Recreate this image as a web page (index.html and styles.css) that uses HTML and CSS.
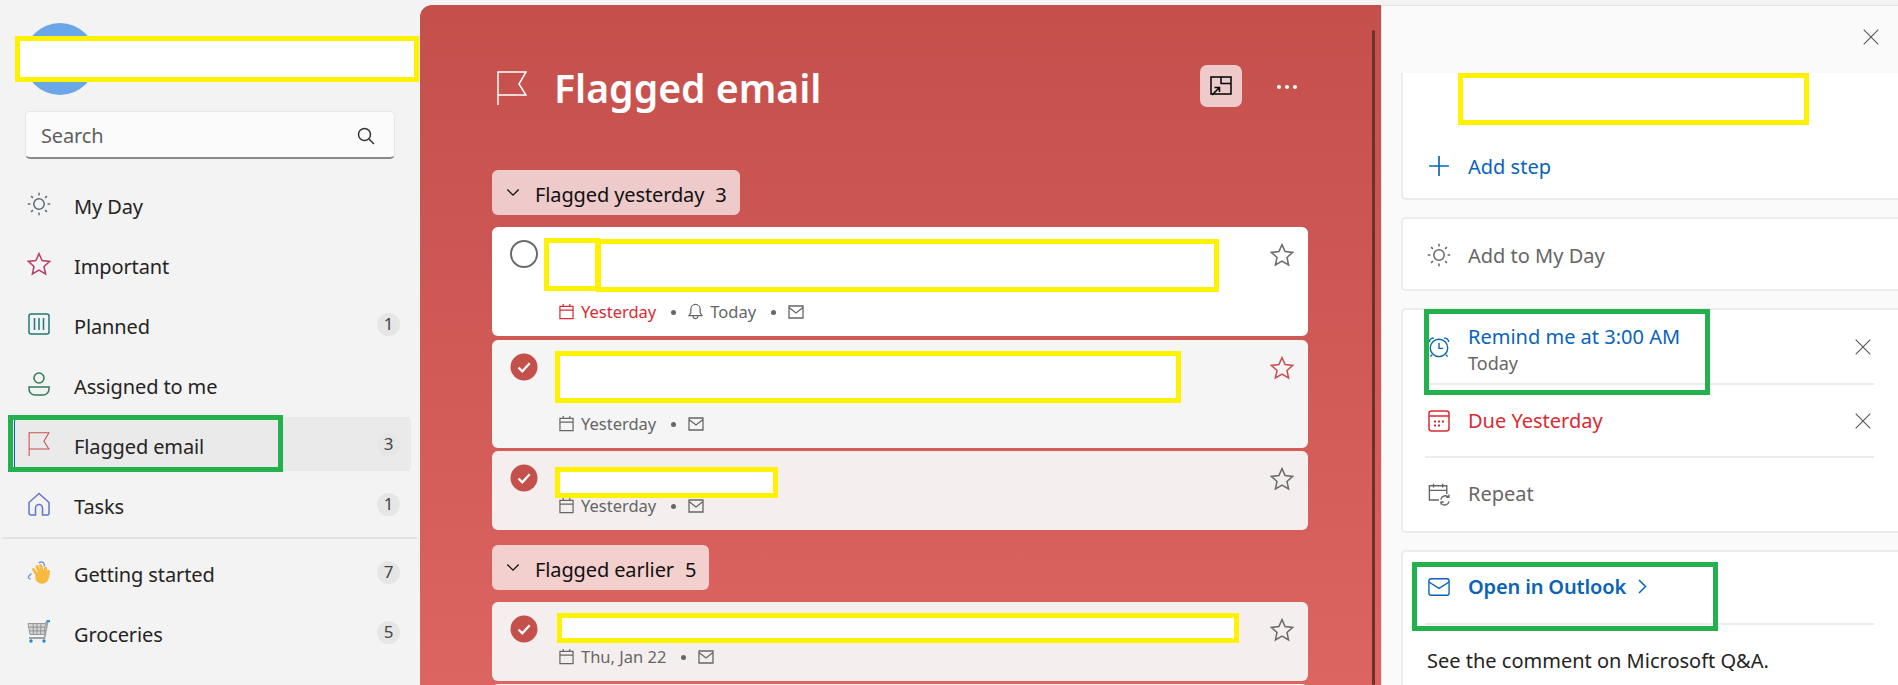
FILE: index.html
```html
<!DOCTYPE html>
<html lang="en">
  <head>
    <meta charset="utf-8" />
    <meta name="viewport" content="width=device-width, initial-scale=1" />
    <title>To Do - Flagged email</title>
    <link rel="stylesheet" href="styles.css">
  </head>
  <body>
    <svg class="defs" width="0" height="0" aria-hidden="true">
      <symbol id="i-sun" viewBox="0 0 24 24">
        <circle cx="12" cy="12" r="5.2" />
        <path d="M12 .8v2.6M12 20.6v2.6M.8 12h2.6M20.6 12h2.6M4.100 4.100 5.900 5.900M18.100 18.100l1.800 1.800M4.100 19.900l1.800-1.800M18.100 5.900l1.800-1.800" />
      </symbol>
      <symbol id="i-star" viewBox="0 0 24 24">
        <path d="M12 1.600l3.100 7 7.600.8-5.700 5.100 1.600 7.500L12 18.200 5.400 22l1.600-7.500L1.300 9.400l7.600-.8z" />
      </symbol>
      <symbol id="i-flag" viewBox="0 0 30 34">
        <path d="M1 34V1h28l-7 12 7 11H1" />
      </symbol>
      <symbol id="i-cal" viewBox="0 0 16 17">
        <path d="M1 3h14v13H1zM1 7h14M4.500 .5V3M11.500 .5V3" />
      </symbol>
      <symbol id="i-mail" viewBox="0 0 16 14">
        <path d="M1 1h14v12H1zM1 2.500l7 5.500 7-5.500" />
      </symbol>
      <symbol id="i-check" viewBox="0 0 28 28">
        <circle cx="14" cy="14" r="13.500" class="fill-red" />
        <path d="M8.500 14.500l3.800 3.800 7.400-8" class="stroke-white" />
      </symbol>
      <symbol id="i-x" viewBox="0 0 16 16">
        <path d="M.7 .7l14.600 14.600M15.300 .7 .7 15.300" />
      </symbol>
      <symbol id="i-chev" viewBox="0 0 16 10">
        <path d="M1.500 1.500 8 8l6.500-6.500" />
      </symbol>
    </svg>

    <div class="app">
      <aside class="sidebar">
        <div class="account">
          <div class="avatar"></div>
        </div>
        <div class="search">
          <span>Search</span>
          <svg class="search-icon" viewBox="0 0 18 18"><circle cx="7.500" cy="7.500" r="6" /><path d="M12 12l5 5" /></svg>
        </div>

        <ul class="nav">
          <li>
            <svg class="nav-icon c-slate"><use href="#i-sun" /></svg>
            <span class="nav-label">My Day</span>
          </li>
          <li>
            <svg class="nav-icon c-rose"><use href="#i-star" /></svg>
            <span class="nav-label">Important</span>
          </li>
          <li>
            <svg class="nav-icon c-teal" viewBox="0 0 24 24"><rect x="2" y="2" width="20" height="20" rx="2" /><path d="M7.500 6v12M12 6v12M16.500 6v12" /></svg>
            <span class="nav-label">Planned</span>
            <span class="badge">1</span>
          </li>
          <li>
            <svg class="nav-icon c-green" viewBox="0 0 24 24"><circle cx="12" cy="6" r="5" /><path d="M2 15h20v2a6 6 0 0 1-6 6H8a6 6 0 0 1-6-6z" /></svg>
            <span class="nav-label">Assigned to me</span>
          </li>
          <li class="active">
            <svg class="nav-icon c-red"><use href="#i-flag" /></svg>
            <span class="nav-label">Flagged email</span>
            <span class="badge">3</span>
          </li>
          <li>
            <svg class="nav-icon c-indigo" viewBox="0 0 24 24"><path d="M12 1.500 2 10.500V21a2 2 0 0 0 2 2h4.500v-7a3.500 3.500 0 0 1 7 0v7H20a2 2 0 0 0 2-2V10.500z" /></svg>
            <span class="nav-label">Tasks</span>
            <span class="badge">1</span>
          </li>
        </ul>
        <hr class="nav-sep" />
        <ul class="nav">
          <li>
            <svg class="nav-icon" viewBox="0 0 24 24">
              <path class="wave" d="M4.500 13.500 1.500 16.500c-.5 1 .5 2.500 2 2.500M12 3c1-1.500 4-1.500 5 .5.500 1 .5 2 0 3" />
              <circle class="hand-palm" cx="15" cy="17" r="6.800" />
              <path class="hand" d="M9.500 14 6.500 9.500M12.500 12 10 6.500M15.500 11.500 13.500 5.500M18.500 12.500V8M21 16l.5-4.500" />
            </svg>
            <span class="nav-label">Getting started</span>
            <span class="badge">7</span>
          </li>
          <li>
            <svg class="nav-icon" viewBox="0 0 24 24">
              <path class="cart" d="M1 3.500h17.500l-1.500 11H3z" />
              <path class="cart-lines" d="M1.500 7.200h16.500M2 10.900h15.500M6 3.500l.5 11M10 3.500v11M14 3.500l-.5 11" />
              <path class="cart-bar" d="M18.500 3.500 19.500 2M2 18h15.500l3-16" />
              <path class="cart-tip" d="M19.500 1.200H23" />
              <circle class="cart-wheel" cx="4" cy="21" r="1.700" />
              <circle class="cart-wheel" cx="17" cy="21" r="1.700" />
            </svg>
            <span class="nav-label">Groceries</span>
            <span class="badge">5</span>
          </li>
        </ul>
      </aside>

      <main class="list">
        <div class="list-scroll"></div>
        <header class="list-head">
          <svg class="list-flag"><use href="#i-flag" /></svg>
          <h1>Flagged email</h1>
          <button class="head-btn" type="button" aria-label="Suggestions">
            <svg viewBox="0 0 22 20"><rect x="1" y="1" width="20" height="17" /><path d="M11 1v6.500h10M2 19l7-7M4.500 11.500H9.500V16" /></svg>
          </button>
          <div class="head-more"><i></i><i></i><i></i></div>
        </header>

        <div class="group">
          <svg class="group-chev"><use href="#i-chev" /></svg>
          <span>Flagged yesterday</span>
          <span class="group-count">3</span>
        </div>

        <article class="task task-one">
          <span class="ring"></span>
          <div class="meta">
            <svg class="meta-icon c-due"><use href="#i-cal" /></svg>
            <span class="c-due">Yesterday</span>
            <i class="dot"></i>
            <svg class="meta-icon" viewBox="0 0 16 17"><path d="M8 1a5 5 0 0 1 5 5v4l2 3H1l2-3V6a5 5 0 0 1 5-5zM5.500 13.500a2.500 2.500 0 0 0 5 0" /></svg>
            <span>Today</span>
            <i class="dot"></i>
            <svg class="meta-icon mail"><use href="#i-mail" /></svg>
          </div>
          <svg class="star"><use href="#i-star" /></svg>
        </article>

        <article class="task task-two">
          <svg class="done"><use href="#i-check" /></svg>
          <div class="meta">
            <svg class="meta-icon"><use href="#i-cal" /></svg>
            <span>Yesterday</span>
            <i class="dot"></i>
            <svg class="meta-icon mail"><use href="#i-mail" /></svg>
          </div>
          <svg class="star c-red"><use href="#i-star" /></svg>
        </article>

        <article class="task task-three">
          <svg class="done"><use href="#i-check" /></svg>
          <div class="meta">
            <svg class="meta-icon"><use href="#i-cal" /></svg>
            <span>Yesterday</span>
            <i class="dot"></i>
            <svg class="meta-icon mail"><use href="#i-mail" /></svg>
          </div>
          <svg class="star"><use href="#i-star" /></svg>
        </article>

        <div class="group group-two">
          <svg class="group-chev"><use href="#i-chev" /></svg>
          <span>Flagged earlier</span>
          <span class="group-count">5</span>
        </div>

        <article class="task task-three">
          <svg class="done"><use href="#i-check" /></svg>
          <div class="meta">
            <svg class="meta-icon"><use href="#i-cal" /></svg>
            <span>Thu, Jan 22</span>
            <i class="dot"></i>
            <svg class="meta-icon mail"><use href="#i-mail" /></svg>
          </div>
          <svg class="star"><use href="#i-star" /></svg>
        </article>
        <article class="task task-three"></article>
      </main>

      <section class="detail">
        <div class="detail-top">
          <svg class="x-icon close"><use href="#i-x" /></svg>
        </div>

        <div class="card card-steps">
          <div class="row c-link">
            <svg class="row-icon" viewBox="0 0 20 20"><path d="M10 1v18M1 10h18" /></svg>
            <span>Add step</span>
          </div>
        </div>

        <div class="card">
          <div class="row row-day c-muted">
            <svg class="row-icon"><use href="#i-sun" /></svg>
            <span>Add to My Day</span>
          </div>
        </div>

        <div class="card">
          <div class="row row-sep row-remind">
            <svg class="row-icon c-link" viewBox="0 0 24 24">
              <circle cx="12" cy="13" r="9.500" />
              <path d="M12 7.500V13.500H16.500M1.500 6.500a4 4 0 0 1 5-4M22.500 6.500a4 4 0 0 0-5-4M4.500 20.500l-2 2M19.500 20.500l2 2" />
            </svg>
            <div class="row-text">
              <span class="c-link">Remind me at 3:00 AM</span>
              <span class="row-sub">Today</span>
            </div>
            <svg class="x-icon"><use href="#i-x" /></svg>
          </div>
          <div class="row row-sep row-due c-due">
            <svg class="row-icon" viewBox="0 0 22 22">
              <rect x="1" y="1" width="20" height="20" rx="2.500" />
              <path d="M1 6h20" />
              <path class="cal-dots" d="M6 10.500h2v2H6zM10 10.500h2v2h-2zM14 10.500h2v2h-2zM6 14.500h2v2H6zM10 14.500h2v2h-2z" />
            </svg>
            <span>Due Yesterday</span>
            <svg class="x-icon"><use href="#i-x" /></svg>
          </div>
          <div class="row row-repeat c-muted">
            <svg class="row-icon" viewBox="0 0 24 24">
              <path d="M12 18.500H1.500V3h19v9M1.500 8h19M6 .8v4M16 .8v4" />
              <path d="M14 18a5 5 0 0 1 8.500-2.500M23 20a5 5 0 0 1-8.500 2.500M22.800 12.500v3h-3M14.200 23.500v-2.800h3" />
            </svg>
            <span>Repeat</span>
          </div>
        </div>

        <div class="card card-note">
          <div class="row row-sep row-open">
            <svg class="row-icon c-link" viewBox="0 0 24 20"><rect x="1" y="1" width="22" height="18" rx="2.500" /><path d="M1 4.500l11 7 11-7" /></svg>
            <strong class="c-link">Open in Outlook</strong>
            <svg class="open-chev" viewBox="0 0 9 15"><path d="M1 1l6.500 6.500L1 14" /></svg>
          </div>
          <p class="note">See the comment on Microsoft Q&amp;A.</p>
        </div>
      </section>
    </div>

    <!-- redaction boxes that sit on top of the screenshot -->
    <div class="mark mark-y m-user"></div>
    <div class="mark mark-g m-nav"></div>
    <div class="mark mark-y m-t1a"></div>
    <div class="mark mark-y m-t1b"></div>
    <div class="mark mark-y m-t2"></div>
    <div class="mark mark-y m-t3"></div>
    <div class="mark mark-y m-t4"></div>
    <div class="mark mark-y m-title"></div>
    <div class="mark mark-g m-remind"></div>
    <div class="mark mark-g m-open"></div>
  </body>
</html>
```
FILE: styles.css
```css
* {
  box-sizing: border-box;
}
html,
body {
  height: 685px;
  margin: 0;
  overflow: hidden;
}
body {
  background: #f3f3f3;
  color: #252423;
  font-family: "Noto Sans", sans-serif;
  font-size: 20px;
  position: relative;
}
svg {
  display: block;
  fill: none;
  stroke: currentColor;
  stroke-width: 1.5;
  flex: none;
}
.defs {
  position: absolute;
}
.app {
  display: flex;
  height: 685px;
}

/* colours */
.c-slate { color: #5b6b78; }
.c-rose { color: #b83c68; }
.c-teal { color: #1f7a78; }
.c-green { color: #2d7d5a; }
.c-red { color: #c9504d; }
.c-indigo { color: #6276c9; }
.c-due { color: #d92b32; }
.c-link { color: #0a63b8; }
.c-muted { color: #666; }
.fill-red { fill: #c4504c; stroke: none; }
.stroke-white { stroke: #fff; stroke-width: 2.2; }

/* sidebar */
.sidebar {
  width: 420px;
  flex: none;
  padding-top: 23px;
  letter-spacing: -0.12px;
}
.account {
  height: 72px;
  padding-left: 24px;
}
.avatar {
  width: 72px;
  height: 72px;
  border-radius: 50%;
  background: #6ba6e9;
}
.search {
  display: flex;
  align-items: center;
  justify-content: space-between;
  width: 370px;
  height: 48px;
  margin: 16px 0 0 25px;
  padding: 2px 19px 0 15px;
  background: #fbfbfb;
  border: 1px solid #e6e6e6;
  border-bottom: 2px solid #8a8a8a;
  border-radius: 5px;
  color: #5f5f5f;
}
.search-icon {
  width: 18px;
  height: 18px;
  color: #333;
}
.nav {
  list-style: none;
  margin: 0;
  padding: 0;
}
.sidebar .search + .nav {
  margin-top: 18px;
}
.nav li {
  display: flex;
  align-items: center;
  width: 397px;
  height: 54px;
  margin: 0 0 6px 14px;
  padding: 0 11px 0 13px;
  border-radius: 5px;
}
.nav li.active {
  background: #eaeaea;
  box-shadow: inset 1px 0 0 #0a63b8;
}
.nav-icon {
  width: 24px;
  height: 24px;
  overflow: visible;
}
.nav-label {
  margin-left: 23px;
  padding-top: 5px;
  flex: 1;
}
.badge {
  width: 23px;
  height: 23px;
  border-radius: 50%;
  background: #e6e6e6;
  color: #444;
  font-size: 17px;
  line-height: 22px;
  text-align: center;
}
.nav-sep {
  width: 414px;
  height: 2px;
  margin: 0 0 6px 3px;
  border: 0;
  background: #e2e2e2;
}
.wave { stroke: #6b9ae8; stroke-width: 1.4; }
.hand-palm { fill: #f7b93e; stroke: none; }
.hand { stroke: #f7b93e; stroke-width: 3; stroke-linecap: round; }
.cart { fill: #d4d4d4; stroke: #9a9a9a; stroke-width: 1; }
.cart-lines { stroke: #8d8d8d; stroke-width: .9; }
.cart-bar { stroke: #a2a2a2; stroke-width: 1.800; }
.cart-tip { stroke: #1f8ad6; stroke-width: 2; }
.cart-wheel { fill: #1f8ad6; stroke: none; }

/* task list */
.list {
  position: relative;
  width: 961px;
  flex: none;
  margin-top: 5px;
  padding-left: 72px;
  border-radius: 12px 0 0 0;
  background: linear-gradient(#c44f4b, #dc6461);
  overflow: hidden;
}
.list-scroll {
  position: absolute;
  top: 25px;
  bottom: 0;
  left: 952px;
  width: 3px;
  border-radius: 2px;
  background: #6f2f2d;
}
.list-head {
  display: flex;
  align-items: center;
  width: 816px;
  height: 42px;
  margin-top: 60px;
  color: #fff;
}
.list-flag {
  width: 30px;
  height: 34px;
  margin: 3px 0 0 5px;
}
.list-head h1 {
  flex: 1;
  margin: 4px 0 0 27px;
  font-size: 39.2px;
  font-weight: 600;
  line-height: 42px;
}
.head-btn {
  width: 42px;
  height: 42px;
  margin: 0;
  padding: 0 0 0 10px;
  border: 0;
  border-radius: 7px;
  background: #eecaca;
  color: #000;
}
.head-btn svg {
  width: 22px;
  height: 20px;
}
.head-more {
  display: flex;
  gap: 4px;
  margin: 2px 11px 0 35px;
}
.head-more i {
  width: 4px;
  height: 4px;
  border-radius: 50%;
  background: #fff;
}
.group {
  display: inline-flex;
  align-items: center;
  height: 45px;
  margin-top: 63px;
  padding: 3px 13px 0 14px;
  border-radius: 6px;
  background: #eecaca;
  color: #111;
  letter-spacing: -0.12px;
}
.group-two {
  margin-top: 12px;
  background: #f3cfce;
}
.group-chev {
  width: 14px;
  height: 9px;
  margin: -3px 15px 0 0;
}
.group-count {
  margin-left: 11px;
}
.task {
  position: relative;
  width: 816px;
  margin-bottom: 3px;
  padding: 13px 14px 0 18px;
  border-radius: 6px;
  background: #f4efee;
  color: #666;
  font-size: 16.5px;
}
.group + .task {
  margin-top: 12px;
}
.task-one {
  height: 109px;
  margin-bottom: 4px;
  background: #fff;
}
.task-two {
  height: 108px;
  background: #f5f5f5;
}
.task-three {
  height: 79px;
}
.ring {
  display: block;
  width: 28px;
  height: 28px;
  border: 2px solid #6b6b6b;
  border-radius: 50%;
}
.done {
  width: 28px;
  height: 28px;
  stroke: none;
}
.star {
  position: absolute;
  top: 16px;
  right: 14px;
  width: 24px;
  height: 24px;
  color: #6b6b6b;
}
.star.c-red {
  color: #c9504d;
}
.meta {
  display: flex;
  align-items: center;
  position: absolute;
  left: 67px;
  bottom: 14px;
  height: 22px;
}
.meta-icon {
  width: 15px;
  height: 17px;
  margin-right: 7px;
  stroke-width: 1.3;
}
.meta-icon.mail {
  width: 16px;
  height: 14px;
  margin-top: 2px;
}
.dot {
  width: 5px;
  height: 5px;
  margin: 2px 12px 0 15px;
  border-radius: 50%;
  background: #666;
}

/* detail pane */
.detail {
  flex: 1;
  margin-top: 5px;
  padding-left: 20px;
  background: #fafafa;
  box-shadow: inset 1px 1px 0 #e6e6e6;
}
.detail-top {
  height: 68px;
  position: relative;
  margin-left: -20px;
}
.close {
  position: absolute;
  top: 24px;
  right: 19px;
}
.x-icon {
  width: 16px;
  height: 16px;
  color: #555;
  stroke-width: 1.1;
}
.card {
  margin-bottom: 17px;
  background: #fff;
  border: 2px solid #ececec;
  border-right: 0;
  border-radius: 5px 0 0 5px;
}
.card-steps {
  display: flex;
  align-items: flex-end;
  height: 127px;
  border-top: 0;
  border-top-left-radius: 0;
}
.card-steps .row {
  width: 100%;
  min-height: 62px;
  margin-bottom: 1px;
}
.row {
  display: flex;
  align-items: center;
  min-height: 72px;
  margin: 0 24px 0 22px;
  padding-left: 1px;
}
.row-day {
  min-height: 70px;
  padding-top: 2px;
}
.row-remind {
  min-height: 75px;
}
.row-due {
  min-height: 73px;
}
.row-repeat {
  min-height: 73px;
  padding-bottom: 2px;
}
.row-sep {
  border-bottom: 2px solid #ececec;
}
.row-icon {
  width: 22px;
  height: 22px;
  margin: 0 18px 0 2px;
  overflow: visible;
}
.row-day .row-icon {
  width: 24px;
  height: 24px;
  margin: 0 17px 0 1px;
}
.row > span,
.row-text,
.row > strong {
  flex: 1;
}
.row-open > strong {
  flex: none;
  font-weight: 600;
  letter-spacing: -0.15px;
}
.row-remind .row-text {
  display: flex;
  flex-direction: column;
  padding-top: 6px;
  line-height: 26px;
}
.row-sub {
  color: #666;
  font-size: 18px;
}
.row .x-icon {
  margin-right: 3px;
}
.cal-dots {
  fill: currentColor;
  stroke: none;
}
.row-open {
  min-height: 73px;
  padding-bottom: 2px;
}
.open-chev {
  width: 9px;
  height: 15px;
  margin-left: 12px;
  color: #0a63b8;
}
.card-note {
  padding-bottom: 40px;
}
.note {
  margin: 22px 0 0 24px;
}

/* redaction boxes */
.mark {
  position: absolute;
  border: 5px solid;
}
.mark-y {
  border-color: #fff200;
  background: #fff;
}
.mark-g {
  border-color: #22b14c;
}
.m-user { left: 15px; top: 36px; width: 404px; height: 46px; }
.m-nav { left: 8px; top: 415px; width: 275px; height: 57px; }
.m-t1a { left: 544px; top: 238px; width: 56px; height: 53px; }
.m-t1b { left: 596px; top: 239px; width: 623px; height: 53px; }
.m-t2 { left: 555px; top: 351px; width: 626px; height: 52px; }
.m-t3 { left: 555px; top: 467px; width: 223px; height: 31px; }
.m-t4 { left: 557px; top: 613px; width: 682px; height: 30px; }
.m-title { left: 1458px; top: 73px; width: 351px; height: 52px; }
.m-remind { left: 1424px; top: 309px; width: 286px; height: 86px; }
.m-open { left: 1412px; top: 562px; width: 306px; height: 69px; }
```
